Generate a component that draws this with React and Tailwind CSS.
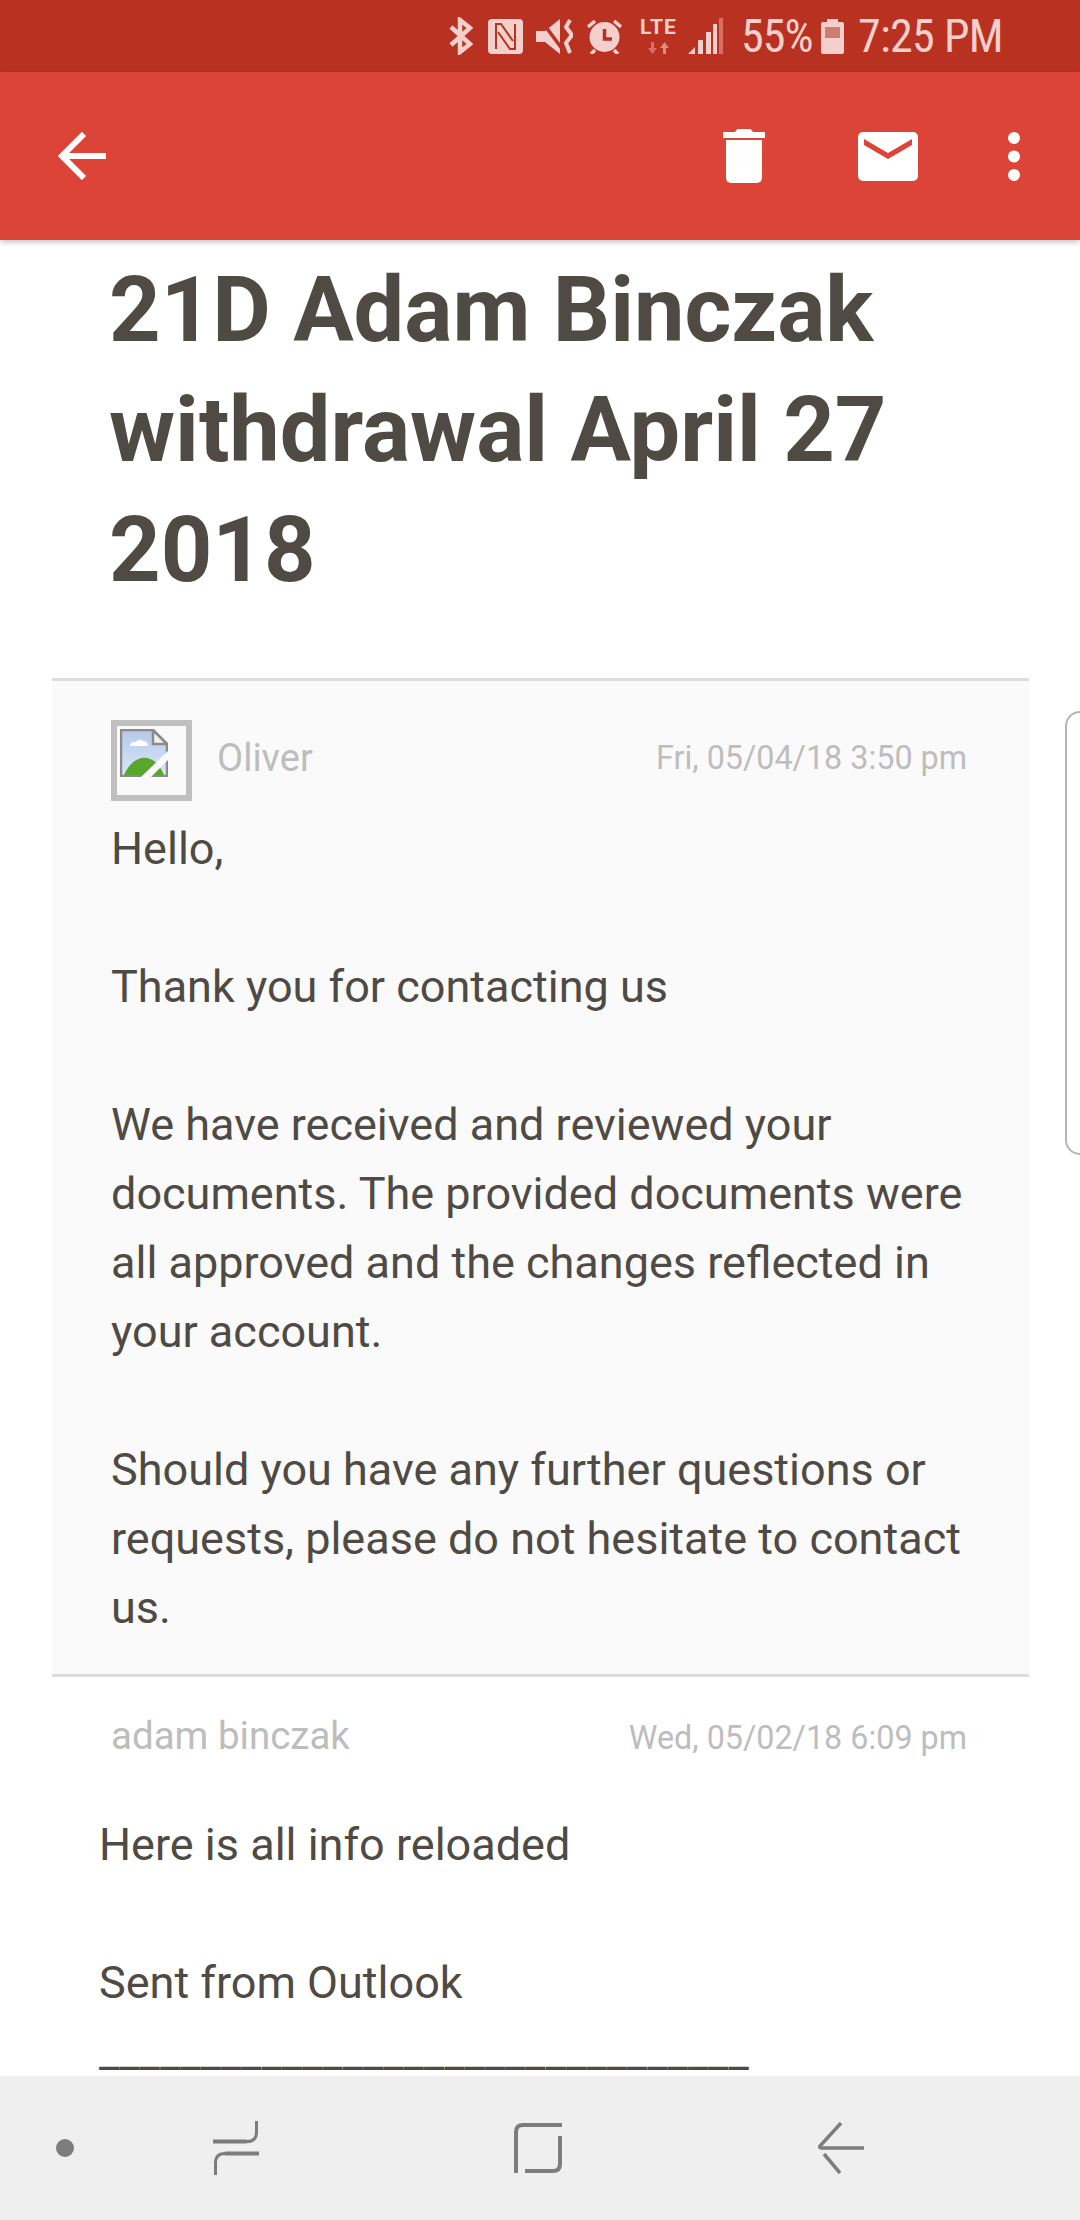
import React from "react";

const Bluetooth = () => (
  <svg width="24" height="38" viewBox="0 0 24 38" fill="none" stroke="#f3d0cb" strokeWidth="4.5">
    <path d="M2 10 L21 27 L11 35 V3 L21 11 L2 28" />
  </svg>
);
const Nfc = () => (
  <svg width="35" height="35" viewBox="0 0 35 35" fill="none">
    <rect width="35" height="35" rx="4" fill="#f3d0cb" />
    <path d="M8 30 V5 H13 L25 22" stroke="#b93221" strokeWidth="2" />
    <path d="M27 5 V30 H22 L10 13" stroke="#b93221" strokeWidth="2" />
  </svg>
);
const Mute = () => (
  <svg width="37" height="35" viewBox="0 0 37 35" fill="none">
    <path d="M0 12 H9 L24 0 V35 L9 23 H0 Z" fill="#f3d0cb" />
    <path d="M4 0 L30 35" stroke="#b93221" strokeWidth="3.5" />
    <path d="M34 1 L30 8 L36 16 L30 24 L34 34" stroke="#f3d0cb" strokeWidth="4" />
  </svg>
);
const Alarm = () => (
  <svg width="35" height="35" viewBox="0 0 35 35" fill="none">
    <circle cx="17.5" cy="18" r="15" fill="#f3d0cb" />
    <path d="M17.5 10 V20 H25" stroke="#b93221" strokeWidth="3.5" />
    <path d="M1 8 L8 2 M34 8 L27 2 M8 31 L4 35 M27 31 L31 35" stroke="#f3d0cb" strokeWidth="3.5" />
  </svg>
);
const Lte = () => (
  <div className="relative w-[37px] h-[35px]">
    <span className="absolute left-0 top-0 text-[21px] leading-[16px] font-bold tracking-[1px] text-[#f3d0cb]">LTE</span>
    <svg className="absolute left-[8px] top-[23px]" width="21" height="12" viewBox="0 0 21 12" fill="#d96f63">
      <path d="M3 0 H6 V6 H9 L4.5 12 L0 6 H3 Z" />
      <path d="M15 12 H18 V6 H21 L16.5 0 L12 6 H15 Z" fill="#e08a80" />
    </svg>
  </div>
);
const Signal = () => (
  <svg width="35" height="36" viewBox="0 0 35 36">
    <path d="M0 36 L7 29 V36 Z" fill="#f3d0cb" />
    <rect x="10" y="22" width="5" height="14" fill="#f3d0cb" />
    <rect x="18" y="14" width="5" height="22" fill="#f3d0cb" />
    <rect x="25" y="6" width="4" height="30" fill="#f3d0cb" />
    <rect x="31" y="0" width="4" height="36" fill="#d96f63" />
  </svg>
);
const Battery = () => (
  <svg width="23" height="35" viewBox="0 0 23 35">
    <path d="M6 0 H17 V3 H21 a2 2 0 0 1 2 2 V33 a2 2 0 0 1 -2 2 H2 a2 2 0 0 1 -2 -2 V5 a2 2 0 0 1 2 -2 H6 Z" fill="#f3d0cb" />
    <rect x="4" y="8" width="15" height="11" fill="#cf7c72" />
  </svg>
);

const BrokenImage = () => (
  <svg width="48" height="48" viewBox="0 0 48 48">
    <defs>
      <linearGradient id="sky" x1="0" y1="0" x2="0" y2="1">
        <stop offset="0" stopColor="#b4c9ea" />
        <stop offset="1" stopColor="#dbe6f7" />
      </linearGradient>
    </defs>
    <path d="M1 1 H33 L47 15 V47 H1 Z" fill="url(#sky)" stroke="#8a8a8a" strokeWidth="2.5" />
    <path d="M33 1 V15 H47 Z" fill="#f0f0f0" stroke="#8a8a8a" strokeWidth="2.5" />
    <path d="M10 17 q1 -5 6 -4 q3 -4 7 -1 q5 0 5 5 Z" fill="#ffffff" />
    <path d="M4 46 C10 32 20 28 27 29 C34 30 40 36 44 46 Z" fill="#58a72c" />
    <path d="M21 48 L48 22 V31 L31 48 Z" fill="#fafafa" />
  </svg>
);

export default function App() {
  return (
    <div className="relative w-[1080px] h-[2220px] flex flex-col overflow-hidden bg-white font-['Roboto',sans-serif] text-[#4f4a43]">
      <div className="h-[72px] shrink-0 bg-[#b93221] flex items-center pl-[449px] text-[#f3d0cb]">
        <div className="flex items-center h-[38px]">
          <Bluetooth />
          <div className="w-[15px]" />
          <Nfc />
          <div className="w-[13px]" />
          <Mute />
          <div className="w-[14px]" />
          <Alarm />
          <div className="w-[18px]" />
          <Lte />
          <div className="w-[11px]" />
          <Signal />
          <div className="w-[18px]" />
          <span className="w-[67px] text-[46px] leading-[38px] tracking-[-1px] [font-stretch:75%] whitespace-nowrap">55%</span>
          <div className="w-[13px]" />
          <Battery />
          <div className="w-[14px]" />
          <span className="text-[46px] leading-[38px] tracking-[-0.7px] [font-stretch:75%] whitespace-nowrap">7:25 PM</span>
        </div>
      </div>

      <header className="relative z-10 h-[168px] shrink-0 bg-[#dc4437] shadow-[0_2px_6px_rgba(0,0,0,0.25)] flex items-center pl-[58px] pr-[60px]">
        <svg width="48" height="48" viewBox="0 0 48 48" fill="none" stroke="#fff" strokeWidth="6">
          <path d="M48 24 H4 M26 2 L4 24 L26 46" />
        </svg>
        <div className="ml-auto flex items-center">
          <svg width="42" height="54" viewBox="0 0 42 54" fill="#fff">
            <path d="M0 3 H12 L14 0.5 a2 2 0 0 1 2 -0.5 H26 a2 2 0 0 1 2 0.5 L30 3 H42 V9 H0 Z" />
            <path d="M3 11 H39 V49 a5 5 0 0 1 -5 5 H8 a5 5 0 0 1 -5 -5 Z" />
          </svg>
          <svg className="ml-[93px]" width="60" height="49" viewBox="0 0 60 49">
            <rect width="60" height="49" rx="5" fill="#fff" />
            <path d="M6 7 L30 21 L54 7 V13 L30 27 L6 13 Z" fill="#dc4437" />
          </svg>
          <svg className="ml-[90px]" width="12" height="49" viewBox="0 0 12 49" fill="#fff">
            <circle cx="6" cy="6" r="6" />
            <circle cx="6" cy="24.5" r="6" />
            <circle cx="6" cy="43" r="6" />
          </svg>
        </div>
      </header>

      <main className="flex-1 min-h-0 overflow-hidden">
        <h1 className="mt-[11px] pl-[109px] pr-[100px] text-[90px] leading-[120px] font-bold">
          21D Adam Binczak withdrawal April 27 2018
        </h1>

        <section className="mt-[67px] ml-[52px] w-[977px] border-t-[3px] border-b-[3px] border-[#dddddd] bg-[#fafafa] pt-[39px] pl-[59px] pr-[62px] pb-[32px]">
          <div className="flex items-center h-[81px]">
            <div className="w-[81px] h-[81px] border-[6px] border-[#c0c0c0] p-[3px]">
              <BrokenImage />
            </div>
            <span className="ml-[25px] pb-[4px] text-[38px] text-[#bdbdbd]">Oliver</span>
            <span className="ml-auto pb-[4px] text-[32.3px] text-[#bdbdbd]">Fri, 05/04/18 3:50 pm</span>
          </div>
          <div className="mt-[13px] text-[45px] leading-[69px]">
            <p className="mb-[69px]">Hello,</p>
            <p className="mb-[69px]">Thank you for contacting us</p>
            <p className="mb-[69px]">We have received and reviewed your documents. The provided documents were all approved and the changes reflected in your account.</p>
            <p>Should you have any further questions or requests, please do not hesitate to contact us.</p>
          </div>
        </section>

        <section className="ml-[52px] w-[977px]">
          <div className="flex items-center justify-between h-[118px] pl-[59px] pr-[62px]">
            <span className="text-[38.5px] text-[#bdbdbd]">adam binczak</span>
            <span className="pt-[4px] text-[32.3px] text-[#bdbdbd]">Wed, 05/02/18 6:09 pm</span>
          </div>
          <div className="mt-[15px] pl-[47px] text-[45px] leading-[69px]">
            <p className="mb-[69px]">Here is all info reloaded</p>
            <p>Sent from Outlook</p>
            <p className="whitespace-nowrap">________________________________</p>
          </div>
        </section>
      </main>

      <div className="absolute right-0 top-[711px] w-[15px] h-[444px] border-l-2 border-t-2 border-b-2 border-[#b5b5b5] rounded-l-[16px]" />

      <nav className="relative h-[144px] shrink-0 bg-[#efefef] flex items-center pl-[56px]">
        <span className="w-[18px] h-[18px] rounded-full bg-[#7d7d7d]" />
        <svg className="ml-[139px]" width="46" height="54" viewBox="0 0 46 54" fill="none" stroke="#7d7d7d">
          <path d="M0 20.5 H34 Q43.5 20.5 43.5 11 V0" strokeWidth="3" />
          <path d="M46 32.5 H12 Q2.5 32.5 2.5 42 V54" strokeWidth="3" />
          <path d="M0 20.5 H34 M46 32.5 H12" strokeWidth="4" />
        </svg>
        <svg className="ml-[255px]" width="48" height="50" viewBox="0 0 48 50" fill="none" stroke="#7d7d7d">
          <path d="M48 2 H9 Q2 2 2 9 V50" strokeWidth="4" />
          <path d="M46 13 V41 Q46 48 39 48 H11" strokeWidth="4" />
        </svg>
        <svg className="ml-[256px]" width="46" height="52" viewBox="0 0 46 52" fill="none" stroke="#7d7d7d" strokeWidth="3.5">
          <path d="M23 1 L2 24 Q1 26 4 26 H46" />
          <path d="M6 32 L22 51" />
        </svg>
      </nav>
    </div>
  );
}
